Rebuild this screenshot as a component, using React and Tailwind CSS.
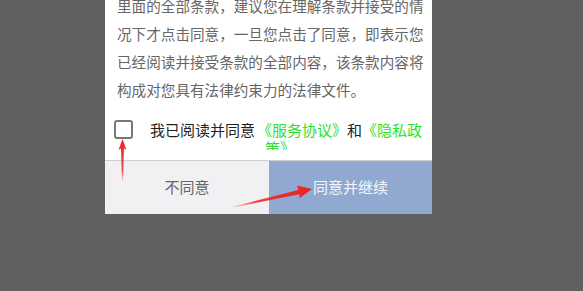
import { useState } from "react";

const lines = [
  "里面的全部条款，建议您在理解条款并接受的情",
  "况下才点击同意，一旦您点击了同意，即表示您",
  "已经阅读并接受条款的全部内容，该条款内容将",
  "构成对您具有法律约束力的法律文件。",
];

const Arrows = () => (
  <svg className="pointer-events-none absolute inset-0" width="583" height="291" viewBox="0 0 583 291">
    <defs>
      <linearGradient id="fadeDown" x1="0" y1="0" x2="0" y2="1">
        <stop offset="0" stopColor="#ec2420" />
        <stop offset="0.75" stopColor="#ec2420" stopOpacity="0.8" />
        <stop offset="1" stopColor="#ec2420" stopOpacity="0" />
      </linearGradient>
      <linearGradient id="fadeLeft" x1="1" y1="0" x2="0" y2="0">
        <stop offset="0" stopColor="#ec2420" />
        <stop offset="0.7" stopColor="#ec2420" stopOpacity="0.85" />
        <stop offset="1" stopColor="#ec2420" stopOpacity="0.1" />
      </linearGradient>
    </defs>
    {/* arrow pointing up at the checkbox */}
    <polygon points="122.5,139 126.5,150 124,148.5 123,182 122,182 121,148.5 118.5,150" fill="url(#fadeDown)" />
    {/* arrow pointing at the confirm button */}
    <polygon
      points="312,189 299.6,198 299.3,194.3 233,207.5 233,206.5 298.3,190 297,185.5"
      fill="url(#fadeLeft)"
    />
  </svg>
);

const App = () => {
  const [checked, setChecked] = useState(false);

  return (
    <div
      className="relative h-[291px] w-[583px] overflow-hidden bg-[#606060]"
      style={{ fontFamily: '"Noto Sans CJK SC", "Noto Sans", sans-serif' }}
    >
      <div className="ml-[105px] flex w-[327px] flex-col bg-white">
        <div className="-mt-[8px] pl-[12px] text-[14.6px] leading-[28px] text-[#666]">
          {lines.map((line) => (
            <div key={line} className="whitespace-nowrap">
              {line}
            </div>
          ))}
        </div>

        <div className="pt-[16px] pb-[10px]">
          <div className="flex h-[30px] items-start overflow-hidden">
            <button
              type="button"
              onClick={() => setChecked(!checked)}
              className="ml-[9px] h-[19px] w-[19px] shrink-0 rounded-[3px] border-2 border-[#777] bg-white"
            />
            <div className="ml-[17px] mt-[1px] flex text-[15px] leading-[18px] text-[#222]">
              <span className="whitespace-nowrap">我已阅读并同意</span>
              <span className="ml-[2px] w-[172px] pl-[8px] indent-[-8px] text-[#2ee02e]">
                《服务协议》<span className="text-[#222]">和</span>《隐私政策》
              </span>
            </div>
          </div>
        </div>

        <div className="flex h-[54px] border-t border-[#cfcfcf] text-[15px]">
          <button type="button" className="flex-1 bg-[#f1f1f3] text-[#666]">
            不同意
          </button>
          <button type="button" className="w-[163px] bg-[#91a8d0] text-[#f4f6fa]">
            同意并继续
          </button>
        </div>
      </div>
      <Arrows />
    </div>
  );
};

export default App;
